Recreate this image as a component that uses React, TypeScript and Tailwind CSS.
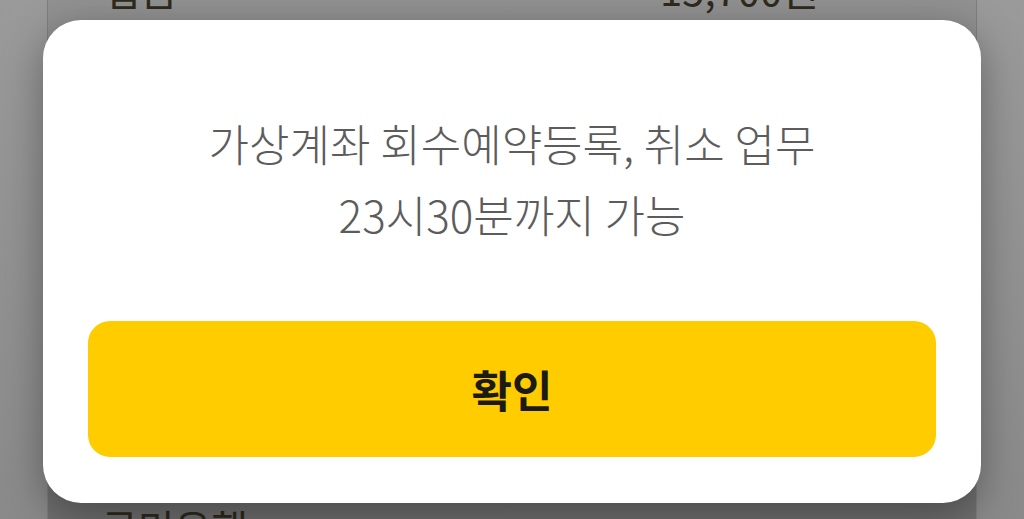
const font = { fontFamily: '"Noto Sans CJK KR", "Noto Sans", sans-serif' };

function ConfirmDialog({ message, onConfirm }: { message: string[]; onConfirm?: () => void }) {
  return (
    <div className="absolute inset-0 flex items-start justify-center pt-[20px]">
      <div className="flex w-[938px] flex-col rounded-[38px] bg-white px-[45px] pt-[88px] pb-[46px] shadow-[0_12px_40px_rgba(0,0,0,0.35)]">
        <p className="text-center text-[44px] leading-[71px] font-light text-[#5c5c5c]">
          {message.map((line, i) => (
            <span key={i} className="block">
              {line}
            </span>
          ))}
        </p>
        <button
          type="button"
          onClick={onConfirm}
          className="mt-[71px] flex h-[136px] w-full items-center justify-center rounded-[22px] bg-[#ffcc00] text-[44px] font-bold text-[#1c1a14]"
        >
          확인
        </button>
      </div>
    </div>
  );
}

export default function App() {
  return (
    <div
      className="relative h-[519px] w-full overflow-hidden bg-gradient-to-b from-[#9a9a9a] to-[#8a8a8a]"
      style={font}
    >
      {/* page behind the dimmed overlay */}
      <div className="mx-[47px] flex h-full flex-col justify-between border-x border-[#7e7e7e] bg-gradient-to-b from-[#919191] to-[#6f6f6f]">
        <div className="-mt-[34px] flex items-center justify-between pr-[157px] pl-[56px] text-[40px] leading-[46px] text-[#2e2a1c]">
          <span>입금</span>
          <span>15,700원</span>
        </div>
        <div className="-mb-[34px] pl-[53px] text-[40px] leading-[52px] text-[#2e2a1c]">
          국민은행
        </div>
      </div>

      <ConfirmDialog
        message={["가상계좌 회수예약등록, 취소 업무", "23시30분까지 가능"]}
      />
    </div>
  );
}
